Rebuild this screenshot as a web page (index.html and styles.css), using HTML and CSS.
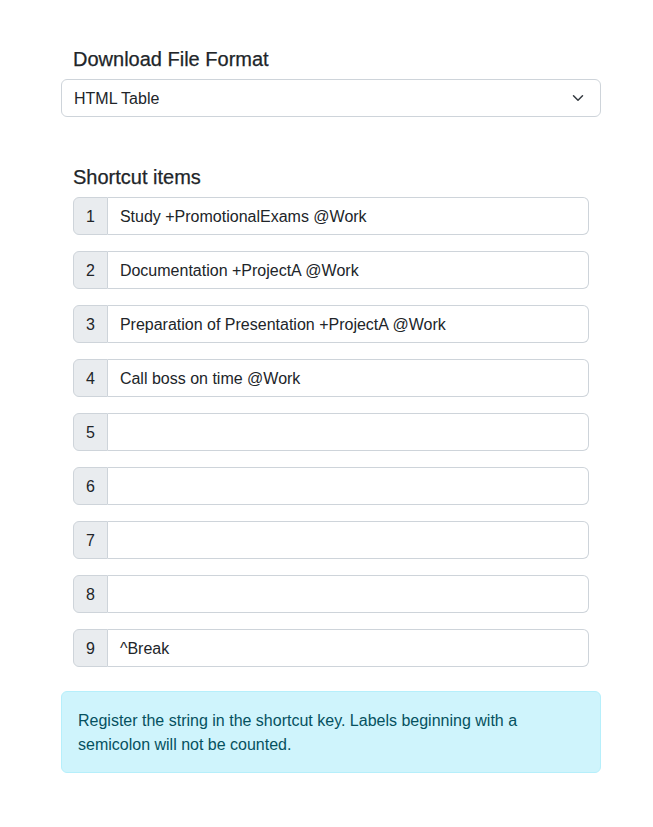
FILE: index.html
```html
<!DOCTYPE html>
<html lang="en">
<head>
<meta charset="utf-8">
<link rel="stylesheet" href="styles.css">
</head>
<body>
<div class="container">
  <h5 class="title">Download File Format</h5>
  <div class="select">
    <span>HTML Table</span>
    <svg class="chev" width="12" height="12" viewBox="0 0 16 16"><path d="M2 5l6 6 6-6" fill="none" stroke="#343a40" stroke-width="2" stroke-linecap="round" stroke-linejoin="round"/></svg>
  </div>
  <div class="section">
    <h5 class="title">Shortcut items</h5>
    <div class="group"><span class="addon">1</span><div class="input">Study +PromotionalExams @Work</div></div>
    <div class="group"><span class="addon">2</span><div class="input">Documentation +ProjectA @Work</div></div>
    <div class="group"><span class="addon">3</span><div class="input">Preparation of Presentation +ProjectA @Work</div></div>
    <div class="group"><span class="addon">4</span><div class="input">Call boss on time @Work</div></div>
    <div class="group"><span class="addon">5</span><div class="input"></div></div>
    <div class="group"><span class="addon">6</span><div class="input"></div></div>
    <div class="group"><span class="addon">7</span><div class="input"></div></div>
    <div class="group"><span class="addon">8</span><div class="input"></div></div>
    <div class="group"><span class="addon">9</span><div class="input">^Break</div></div>
  </div>
  <div class="alert">Register the string in the shortcut key. Labels beginning with a semicolon will not be counted.</div>
</div>
</body>
</html>
```
FILE: styles.css
```css
* { box-sizing: border-box; }
body {
  margin: 0;
  font-family: "Liberation Sans", Arial, sans-serif;
  font-size: 16px;
  line-height: 1.5;
  color: #212529;
  background: #fff;
}
.container {
  width: 540px;
  margin-left: 61px;
  padding-top: 47px;
}
.title {
  margin: 0 0 8px;
  padding: 0 12px;
  font-size: 20px;
  font-weight: 500;
  line-height: 1.2;
  -webkit-text-stroke: 0.25px #212529;
}
.select {
  height: 38px;
  border: 1px solid #ced4da;
  border-radius: 6px;
  padding: 7px 16px 5px 12px;
  display: flex;
  align-items: center;
  justify-content: space-between;
}
.chev { display: block; margin-top: -2px; }
.section {
  margin-top: 48px;
  padding: 0 12px;
}
.section .title { padding: 0; }
.group {
  display: flex;
  height: 38px;
  margin-bottom: 16px;
}
.addon {
  background: #e9ecef;
  border: 1px solid #ced4da;
  border-radius: 6px 0 0 6px;
  padding: 7px 12px 5px;
  display: flex;
  align-items: center;
}
.input {
  flex: 1;
  border: 1px solid #ced4da;
  border-left: none;
  border-radius: 0 6px 6px 0;
  padding: 7px 12px 5px;
  display: flex;
  align-items: center;
}
.alert {
  margin-top: 24px;
  background: #cff4fc;
  border: 1px solid #b6effb;
  color: #055160;
  border-radius: 6px;
  padding: 17px 16px 15px;
}
```
